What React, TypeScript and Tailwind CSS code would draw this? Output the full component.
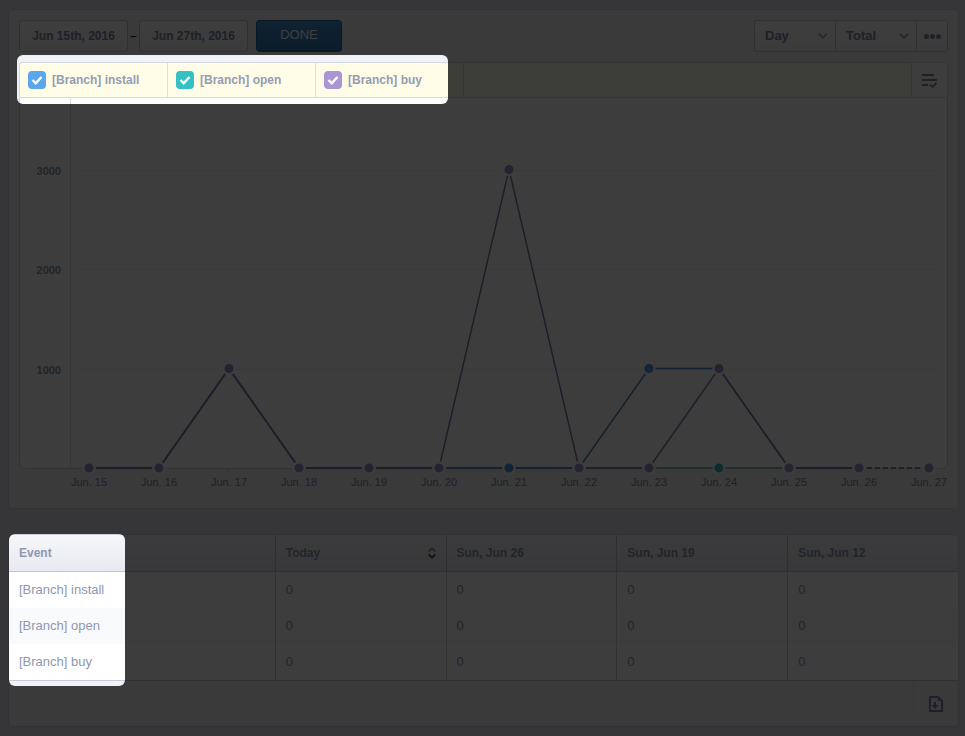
import { ChevronDown } from "lucide-react";
import clsx from "clsx";

const EVENTS = [
  { name: "[Branch] install", box: "bg-[#5ba7ec]" },
  { name: "[Branch] open", box: "bg-[#35c1c3]" },
  { name: "[Branch] buy", box: "bg-[#ab95d2]" },
];

const COLUMNS = ["Today", "Sun, Jun 26", "Sun, Jun 19", "Sun, Jun 12"];

const SERIES = [
  { name: "open", color: "#35b9ba", line: "#6ba3a0", values: [0, 0, 1000, 0, 0, 0, 0, 0, 0, 0, 0, 0, 0] },
  { name: "install", color: "#4a9ae0", line: "#4a86c0", values: [0, 0, 1000, 0, 0, 0, 0, 0, 1000, 1000, 0, 0, 0] },
  { name: "buy", color: "#a48fca", line: "#8079a8", values: [0, 0, 1000, 0, 0, 0, 3000, 0, 0, 1000, 0, 0, 0] },
];

const BASE = 370;
const px = (i: number) => 70 + i * 70;
const py = (v: number) => BASE - (v / 1000) * 99.5;

function Chart() {
  return (
    <svg viewBox="0 0 929 410" className="block w-full" role="img" aria-label="Events per day">
      <path d="M.5 0V364.500a6 6 0 0 0 6 6H922.500a6 6 0 0 0 6-6V0" fill="#fff" stroke="#ccd1da" />
      <path d="M51.500 0V370" stroke="#d3dfe8" />
      {[1000, 2000, 3000].map((v) => (
        <g key={v}>
          <path d={`M62 ${Math.round(py(v)) + 0.5}H919`} stroke="#eceef0" strokeDasharray="3 1" />
          <text x="42" y={Math.round(py(v)) + 5} textAnchor="end" fontSize="11" fontWeight="700" fill="#8f96a8">{v}</text>
        </g>
      ))}
      {Array.from({ length: 13 }, (_, i) => (
        <g key={i}>
          <path d={`M${px(i) - 0.5} 371v4`} stroke="#c5cad3" />
          <text x={px(i)} y="388" textAnchor="middle" fontSize="11" fill="#878b93">Jun. {15 + i}</text>
        </g>
      ))}
      {SERIES.map((s) => (
        <g key={s.name} fill="none" stroke={s.line} strokeWidth="1.500">
          <polyline points={s.values.slice(0, 12).map((v, i) => `${px(i)},${py(v)}`).join(" ")} />
          <path d={`M${px(11)} ${BASE}H${px(12)}`} strokeDasharray="5 3" />
        </g>
      ))}
      {SERIES.map((s) => (
        <g key={s.name} fill={s.color} stroke="#fff" strokeWidth="2">
          {s.values.map((v, i) => (
            <circle key={i} cx={px(i)} cy={py(v)} r="5.500" />
          ))}
        </g>
      ))}
    </svg>
  );
}

function DateField({ label, value }: { label: string; value: string }) {
  return (
    <input
      aria-label={label}
      defaultValue={value}
      className="h-8 w-[109px] rounded-[3px] border border-[#c5cad6] bg-linear-to-b from-white to-[#f4f5f9] text-center text-xs font-bold text-[#82899c]"
    />
  );
}

function Picker({ label, options }: { label: string; options: string[] }) {
  return (
    <label className="relative flex w-[81px] items-center border-r border-[#c5cad6]">
      <select aria-label={label} className="h-full w-full appearance-none pl-[10px] text-[13px] font-bold text-[#82899c]">
        {options.map((o) => <option key={o}>{o}</option>)}
      </select>
      <ChevronDown size={14} strokeWidth={3} className="pointer-events-none absolute right-[5px] text-[#8c9aa5]" />
    </label>
  );
}

function Legend() {
  return (
    <div className="mt-[10px] flex h-9 rounded-t-[3px] border border-[#d5d8df] border-b-[#e0ddc4] bg-[#fffce8]">
      {EVENTS.map((e) => (
        <label key={e.name} className="flex w-[148px] items-center gap-[6px] border-r border-[#e2dfc4] pl-2 text-xs font-bold whitespace-nowrap text-[#949db4]">
          <span className="relative flex">
            <input type="checkbox" defaultChecked className={clsx("size-[18px] appearance-none rounded-[4px]", e.box)} />
            <svg viewBox="0 0 18 18" className="pointer-events-none absolute inset-0" fill="none" stroke="#fff" strokeWidth="2.400">
              <path d="M4.500 9l3.200 3.200L13.500 6" />
            </svg>
          </span>
          {e.name}
        </label>
      ))}
      <button aria-label="Select events" className="ml-auto flex w-9 items-center justify-center border-l border-[#d5d8df] bg-white">
        <svg width="16" height="16" viewBox="0 0 16 16" fill="none" stroke="#858c9f" strokeWidth="2">
          <path d="M0 3h12M0 8h15M0 13h6M8 12.500l2.500 2.500L14.500 11" />
        </svg>
      </button>
    </div>
  );
}

function EventTable() {
  return (
    <section className="mt-[25px] overflow-hidden rounded-[5px] border border-[#cdd2dd] bg-[#f1f2f7]">
      <table className="w-full table-fixed border-separate border-spacing-0 text-left text-[#8f98b0]">
        <thead>
          <tr className="h-[37px] bg-linear-to-b from-[#f6f7fa] to-[#e7e9f0] text-xs">
            <th className="w-[28%] border-b border-[#bcc5d7] pl-[10px] font-bold">Event</th>
            {COLUMNS.map((c, i) => (
              <th key={c} className="border-b border-l border-[#bcc5d7] pr-[9px] pl-[10px] font-bold">
                <div className="flex items-center justify-between">
                  {c}
                  {i === 0 && (
                    <svg width="10" height="12" viewBox="0 0 10 12" fill="none" strokeWidth="1.800">
                      <path d="M1.500 4.500L5 1.500l3.500 3" stroke="#999" />
                      <path d="M1.500 7.500L5 10.500l3.500-3" stroke="#555" />
                    </svg>
                  )}
                </div>
              </th>
            ))}
          </tr>
        </thead>
        <tbody className="text-[13px]">
          {EVENTS.map((e) => (
            <tr key={e.name} className="h-9 bg-white even:bg-[#f9fafc]">
              <td className="pl-[10px]">{e.name}</td>
              {COLUMNS.map((c) => (
                <td key={c} className="border-l border-[#c8cdd8] pl-[10px]">0</td>
              ))}
            </tr>
          ))}
        </tbody>
      </table>
      <div className="flex h-[46px] items-start justify-end border-t border-[#c5cad8]">
        <button aria-label="Download table" className="flex h-[31px] w-[45px] items-end justify-center border-l border-[#e4e6ec]">
          <svg width="14" height="16" viewBox="0 0 14 16" fill="none" stroke="#858c9f" strokeWidth="2">
            <path d="M1 1h8l4 4v10H1zM6 6v5" />
            <path d="M9 0l5 5H9zM2.500 9h7L6 13z" fill="#858c9f" stroke="none" />
          </svg>
        </button>
      </div>
    </section>
  );
}

// Dims the page, leaving the legend and the event names lit.
function Spotlight() {
  return (
    <svg className="pointer-events-none absolute inset-0 size-full" aria-hidden="true">
      <mask id="lit">
        <rect width="100%" height="100%" fill="#fff" />
        <rect x="17" y="55" width="431" height="49" rx="6" fill="#000" />
        <rect x="9" y="534" width="116" height="152" rx="6" fill="#000" />
      </mask>
      <rect width="100%" height="100%" fill="#000" fillOpacity="0.76" mask="url(#lit)" />
    </svg>
  );
}

export default function App() {
  return (
    <div className="relative min-h-screen bg-[#e0e2e8] pt-[9px] pr-[6px] pb-2 pl-2 font-['Liberation_Sans',Arial,sans-serif]">
      <section className="rounded-[4px] border border-[#d0d4dc] bg-[#f1f2f7] px-[10px] pt-[10px]">
        <div className="flex items-center">
          <DateField label="From" value="Jun 15th, 2016" />
          <span className="w-[11px] text-center text-[11px] font-bold text-black">–</span>
          <DateField label="To" value="Jun 27th, 2016" />
          <button className="ml-2 h-8 w-[86px] rounded-[3px] border border-[#2c679a] bg-linear-to-b from-[#4191d2] to-[#2f72b0] pb-[2px] text-[13px] text-white">DONE</button>
          <div className="ml-auto flex h-8 rounded-[3px] border border-[#c5cad6] bg-linear-to-b from-white to-[#f4f5f9]">
            <Picker label="Interval" options={["Day", "Week", "Month"]} />
            <Picker label="Measure" options={["Total", "Unique"]} />
            <button aria-label="More" className="flex w-[30px] items-center justify-center gap-px">
              {[0, 1, 2].map((i) => <span key={i} className="size-[5px] rounded-full bg-[#82899c]" />)}
            </button>
          </div>
        </div>
        <Legend />
        <Chart />
      </section>
      <EventTable />
      <Spotlight />
    </div>
  );
}
